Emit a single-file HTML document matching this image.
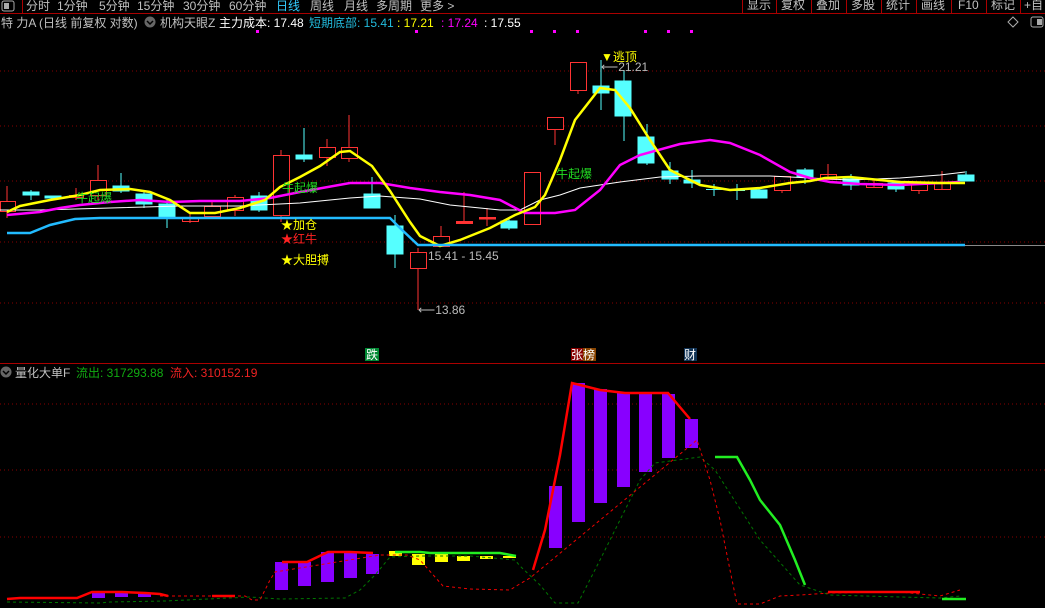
<!DOCTYPE html>
<html><head><meta charset="utf-8"><style>
html,body{margin:0;padding:0;background:#000;width:1045px;height:608px;overflow:hidden}
svg{display:block}
text{font-family:"Liberation Sans","Noto Sans CJK SC",sans-serif;font-size:12px}
</style></head><body>
<svg width="1045" height="608" viewBox="0 0 1045 608" xmlns="http://www.w3.org/2000/svg">
<rect width="1045" height="608" fill="#000"/>
<line x1="0" y1="13.5" x2="1045" y2="13.5" stroke="#a00" stroke-width="1"/>
<rect x="2" y="1" width="12" height="10" rx="2" fill="none" stroke="#aaa"/>
<rect x="4" y="3" width="5" height="6" fill="#aaa"/>
<line x1="22.5" y1="0" x2="22.5" y2="13" stroke="#a00"/>
<g fill="#c0c0c0">
<text x="26" y="10">分时</text><text x="57" y="10">1分钟</text><text x="99" y="10">5分钟</text><text x="137" y="10">15分钟</text><text x="183" y="10">30分钟</text><text x="229" y="10">60分钟</text>
<text x="276" y="10" fill="#3cf">日线</text><text x="310" y="10">周线</text><text x="344" y="10">月线</text><text x="376" y="10">多周期</text><text x="420" y="10">更多 &gt;</text>
</g>
<g stroke="#a00"><line x1="742.5" y1="0" x2="742.5" y2="13"/><line x1="776.5" y1="0" x2="776.5" y2="13"/><line x1="811.5" y1="0" x2="811.5" y2="13"/><line x1="846.5" y1="0" x2="846.5" y2="13"/><line x1="881.5" y1="0" x2="881.5" y2="13"/><line x1="916.5" y1="0" x2="916.5" y2="13"/><line x1="951.5" y1="0" x2="951.5" y2="13"/><line x1="986.5" y1="0" x2="986.5" y2="13"/><line x1="1020.5" y1="0" x2="1020.5" y2="13"/></g>
<g fill="#c0c0c0"><text x="747" y="9">显示</text><text x="781" y="9">复权</text><text x="816" y="9">叠加</text><text x="851" y="9">多股</text><text x="886" y="9">统计</text><text x="921" y="9">画线</text><text x="958" y="9">F10</text><text x="991" y="9">标记</text><text x="1024" y="9">+自</text></g>
<text x="1" y="27" fill="#c0c0c0" font-size="13">特 力A (日线 前复权 对数)</text>
<circle cx="150" cy="22" r="5.5" fill="#666"/><path d="M147 21l3 3 3-3" stroke="#000" stroke-width="1.5" fill="none"/>
<text x="160" y="27" fill="#c0c0c0" font-size="13">机构天眼Z</text>
<text x="219" y="27" fill="#fff" font-size="13">主力成本: 17.48</text>
<text x="309" y="27" fill="#2bd" font-size="13">短期底部: 15.41</text>
<text x="397" y="27" fill="#ff0" font-size="13">: 17.21</text>
<text x="441" y="27" fill="#f0f" font-size="13">: 17.24</text>
<text x="484" y="27" fill="#fff" font-size="13">: 17.55</text>
<g fill="#f0f"><rect x="256" y="30" width="3" height="3"/><rect x="415" y="30" width="3" height="3"/><rect x="530" y="30" width="3" height="3"/><rect x="553" y="30" width="3" height="3"/><rect x="576" y="30" width="3" height="3"/><rect x="644" y="30" width="3" height="3"/><rect x="667" y="30" width="3" height="3"/><rect x="690" y="30" width="3" height="3"/></g>
<path d="M1013 17l5 5-5 5-5-5z" fill="none" stroke="#aaa"/>
<rect x="1031" y="17" width="12" height="10" rx="2" fill="none" stroke="#aaa"/><rect x="1037" y="19" width="5" height="6" fill="#aaa"/>
<g stroke="#800" stroke-dasharray="1 3"><line x1="0" y1="71" x2="1045" y2="71"/><line x1="0" y1="126" x2="1045" y2="126"/><line x1="0" y1="181" x2="1045" y2="181"/><line x1="0" y1="242" x2="1045" y2="242"/><line x1="0" y1="303" x2="1045" y2="303"/>
<line x1="0" y1="404" x2="1045" y2="404"/><line x1="0" y1="470" x2="1045" y2="470"/><line x1="0" y1="537" x2="1045" y2="537"/></g>
<g stroke="#f33" fill="none" stroke-width="1">
<line x1="7" y1="186" x2="7" y2="218"/><rect x="0.5" y="201.5" width="15" height="10" fill="#000"/>
<line x1="76" y1="188" x2="76" y2="200"/><rect x="69.5" y="195.5" width="14" height="2"/>
<line x1="98" y1="165" x2="98" y2="200"/><rect x="90.5" y="180.5" width="16" height="15" fill="#000"/>
<line x1="190" y1="213" x2="190" y2="223"/><rect x="182.5" y="217.5" width="16" height="4"/>
<line x1="212" y1="200" x2="212" y2="216"/><rect x="204.5" y="206.5" width="16" height="10" fill="#000"/>
<line x1="235" y1="195" x2="235" y2="216"/><rect x="227.5" y="197.5" width="16" height="13" fill="#000"/>
<line x1="281" y1="150" x2="281" y2="222"/><rect x="273.5" y="155.5" width="16" height="60" fill="#000"/>
<line x1="327" y1="139" x2="327" y2="166"/><rect x="319.5" y="147.5" width="16" height="10" fill="#000"/>
<line x1="349" y1="115" x2="349" y2="162"/><rect x="341.5" y="147.5" width="16" height="11" fill="#000"/>
<line x1="418" y1="248" x2="418" y2="310"/><rect x="410.5" y="252.5" width="16" height="16" fill="#000"/>
<line x1="441" y1="226" x2="441" y2="246"/><rect x="433.5" y="236.5" width="16" height="10" fill="#000"/>
<line x1="464" y1="192" x2="464" y2="224"/><rect x="456.5" y="221.5" width="16" height="2" fill="#f33"/>
<line x1="487" y1="208" x2="487" y2="226"/><rect x="479.5" y="217.5" width="16" height="1.5" fill="#f33"/>
<rect x="524.5" y="172.5" width="16" height="52" fill="#000"/>
<line x1="555" y1="129" x2="555" y2="145"/><rect x="547.5" y="117.5" width="16" height="12" fill="#000"/>
<line x1="578" y1="90" x2="578" y2="94"/><rect x="570.5" y="62.5" width="16" height="28" fill="#000"/>
<line x1="782" y1="190" x2="782" y2="193"/><rect x="774.5" y="176.5" width="16" height="14"/>
<line x1="828" y1="164" x2="828" y2="180"/><rect x="820.5" y="174.5" width="16" height="5"/>
<line x1="874" y1="180" x2="874" y2="188"/><rect x="866.5" y="183.5" width="16" height="4"/>
<line x1="919" y1="190" x2="919" y2="194"/><rect x="911.5" y="184.5" width="16" height="6"/>
<line x1="942" y1="171" x2="942" y2="190"/><rect x="934.5" y="182.5" width="16" height="7"/>
</g>
<g fill="#5ff" stroke="#5ff">
<line x1="31" y1="190" x2="31" y2="200"/><rect x="23" y="192" width="16" height="3"/>
<rect x="45" y="196" width="16" height="2"/>
<line x1="121" y1="173" x2="121" y2="193"/><rect x="113" y="186" width="16" height="5"/>
<line x1="144" y1="190" x2="144" y2="208"/><rect x="136" y="194" width="16" height="10"/>
<line x1="167" y1="200" x2="167" y2="228"/><rect x="159" y="204" width="16" height="14"/>
<line x1="259" y1="192" x2="259" y2="212"/><rect x="251" y="196" width="16" height="14"/>
<line x1="304" y1="128" x2="304" y2="162"/><rect x="296" y="155" width="16" height="4"/>
<line x1="372" y1="177" x2="372" y2="208"/><rect x="364" y="194" width="16" height="14"/>
<line x1="395" y1="215" x2="395" y2="268"/><rect x="387" y="226" width="16" height="28"/>
<line x1="509" y1="218" x2="509" y2="230"/><rect x="501" y="221" width="16" height="7"/>
<line x1="601" y1="60" x2="601" y2="110"/><rect x="593" y="86" width="16" height="7"/>
<line x1="624" y1="70" x2="624" y2="141"/><rect x="615" y="81" width="16" height="35"/>
<line x1="647" y1="124" x2="647" y2="165"/><rect x="638" y="137" width="16" height="26"/>
<line x1="670" y1="162" x2="670" y2="184"/><rect x="662" y="171" width="16" height="8"/>
<line x1="692" y1="170" x2="692" y2="188"/><rect x="684" y="180" width="16" height="3"/>
<line x1="714" y1="184" x2="714" y2="196"/><line x1="706" y1="189.5" x2="722" y2="189.5"/>
<line x1="737" y1="184" x2="737" y2="200"/><line x1="729" y1="190.5" x2="745" y2="190.5"/>
<line x1="759" y1="187" x2="759" y2="198"/><rect x="751" y="190" width="16" height="8"/>
<line x1="805" y1="168" x2="805" y2="184"/><rect x="797" y="170" width="16" height="7"/>
<line x1="851" y1="174" x2="851" y2="190"/><rect x="843" y="179" width="16" height="6"/>
<line x1="896" y1="181" x2="896" y2="192"/><rect x="888" y="183" width="16" height="6"/>
<line x1="966" y1="171" x2="966" y2="181"/><rect x="958" y="175" width="16" height="6"/>
</g>
<polyline fill="none" stroke="#fff" stroke-width="1" points="0,210 40,210 110,208 180,206 240,206 300,203 350,198 380,196 420,199 450,205 500,210 520,210 540,200 560,195 580,188 620,182 660,177 700,176 770,176 850,180 900,178 940,175 965,172"/>
<polyline fill="none" stroke="#f0f" stroke-width="2.5" points="7,215 40,212 60,208 80,205 110,202 140,200 170,202 200,201 240,201 270,198 300,192 350,183 380,183 410,188 440,192 470,195 500,200 525,213 555,213 575,210 600,190 620,165 640,155 680,144 710,140 730,143 760,155 790,172 810,178 830,182 860,184 900,185 960,182"/>
<polyline fill="none" stroke="#ff0" stroke-width="2.5" points="7,212 20,206 50,200 80,195 100,190 130,189 150,192 170,200 190,213 215,213 240,208 265,200 280,187 300,177 320,166 340,152 350,151 372,166 390,191 410,222 420,236 440,246 460,240 490,228 515,215 535,207 545,195 560,160 575,120 600,88 615,90 630,108 650,140 670,170 700,185 730,190 760,188 790,183 810,181 825,178 850,177 900,182 940,183 965,183"/>
<polyline fill="none" stroke="#2bf" stroke-width="2.5" points="7,233 30,233 50,225 75,219 100,218 390,218 400,228 418,245 965,245"/>
<line x1="965" y1="245.5" x2="1045" y2="245.5" stroke="#888"/>
<text x="76" y="202" fill="#2d2" font-size="13">牛起爆</text>
<text x="282" y="192" fill="#2d2" font-size="13">牛起爆</text>
<text x="556" y="178" fill="#2d2" font-size="13">牛起爆</text>
<text x="281" y="229" fill="#ff0" font-size="13">★加仓</text>
<text x="281" y="243" fill="#f22" font-size="13">★红牛</text>
<text x="281" y="264" fill="#ff0" font-size="13">★大胆搏</text>
<text x="601" y="61" fill="#ff0" font-size="13">▼逃顶</text>
<text x="601" y="71" fill="#bbb">⟵21.21</text>
<text x="428" y="260" fill="#bbb">15.41 - 15.45</text>
<text x="418" y="314" fill="#bbb">⟵13.86</text>
<rect x="365" y="348" width="14" height="13" fill="#083"/><text x="366" y="359" fill="#fff">跌</text>
<rect x="571" y="348" width="12" height="13" fill="#800"/><rect x="583" y="348" width="13" height="13" fill="#840"/><text x="571" y="359" fill="#fff">张榜</text>
<rect x="684" y="348" width="13" height="13" fill="#135"/><text x="684" y="359" fill="#fff">财</text>
<line x1="0" y1="363.5" x2="1045" y2="363.5" stroke="#a00"/>
<circle cx="6" cy="372" r="5.5" fill="#666"/><path d="M3 371l3 3 3-3" stroke="#000" stroke-width="1.5" fill="none"/>
<text x="15" y="377" fill="#c0c0c0" font-size="13">量化大单F</text>
<text x="76" y="377" fill="#1a1" font-size="13">流出: 317293.88</text>
<text x="170" y="377" fill="#e22" font-size="13">流入: 310152.19</text>
<g fill="#80f">
<rect x="92" y="591" width="13" height="7"/><rect x="115" y="592" width="13" height="5"/><rect x="138" y="593" width="13" height="4"/>
<rect x="275" y="562" width="13" height="28"/><rect x="298" y="562" width="13" height="24"/><rect x="321" y="552" width="13" height="30"/><rect x="344" y="552" width="13" height="26"/><rect x="366" y="554" width="13" height="20"/>
<rect x="549" y="486" width="13" height="62"/><rect x="572" y="383" width="13" height="139"/><rect x="594" y="389" width="13" height="114"/><rect x="617" y="393" width="13" height="94"/><rect x="639" y="394" width="13" height="78"/><rect x="662" y="394" width="13" height="64"/><rect x="685" y="419" width="13" height="29"/>
</g>
<g fill="#ff0"><rect x="389" y="551" width="13" height="5"/><rect x="412" y="554" width="13" height="11"/><rect x="435" y="554" width="13" height="8"/><rect x="457" y="556" width="13" height="5"/><rect x="480" y="556" width="13" height="3"/><rect x="503" y="556" width="13" height="2"/></g>
<polyline fill="none" stroke="#070" stroke-width="1" stroke-dasharray="3 3" points="7,602 100,603 110,602 165,601 250,597 280,599 345,598 360,590 375,575 390,557 420,556 470,556 515,560 520,566 540,585 555,603 578,603 600,560 620,520 640,480 655,463 700,457 715,470 760,540 800,585 830,595 900,597 940,598 960,596"/>
<polyline fill="none" stroke="#e00" stroke-width="1" stroke-dasharray="3 3" points="160,596 245,596 252,600 260,600 265,590 270,580 275,572 380,555 407,555 420,560 443,586 470,589 510,590 518,585 530,578 697,440 710,480 720,520 730,570 737,604 760,604 780,596 800,595 830,593 900,592 940,596 960,590"/>
<polyline fill="none" stroke="#f00" stroke-width="2.5" points="7,599 20,598 77,598 92,592 122,592 145,593 160,594 168,596"/>
<line x1="212" y1="596" x2="235" y2="596" stroke="#f00" stroke-width="2.5"/>
<polyline fill="none" stroke="#f00" stroke-width="2.5" points="282,562 307,562 328,552 350,552 373,553"/>
<polyline fill="none" stroke="#f00" stroke-width="2.5" points="533,570 545,530 560,455 572,383 580,385 600,390 625,393 668,393 690,419"/>
<line x1="828" y1="592" x2="920" y2="592" stroke="#f00" stroke-width="2.5"/>
<polyline fill="none" stroke="#2e2" stroke-width="2.5" points="395,552 420,552 430,553 500,553 516,556"/>
<polyline fill="none" stroke="#2e2" stroke-width="2.5" points="715,457 737,457 750,480 760,500 780,525 795,560 805,585"/>
<line x1="942" y1="599" x2="966" y2="599" stroke="#2e2" stroke-width="2.5"/>
</svg>
</body></html>
